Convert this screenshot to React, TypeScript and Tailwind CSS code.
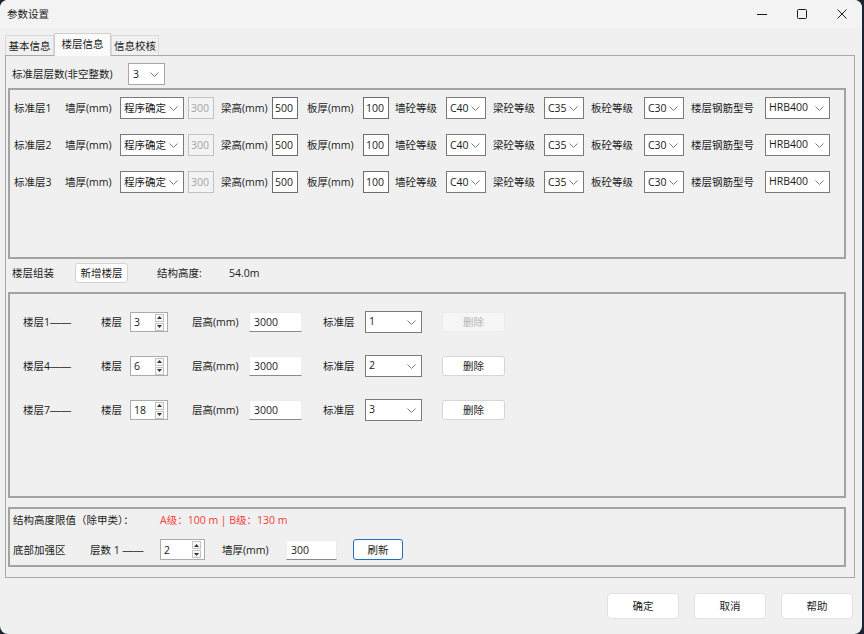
import React from "react";

function Chevron() {
  return (
    <svg width="9" height="5" viewBox="0 0 9 5" className="shrink-0">
      <path d="M0.5 0.5L4.5 4.5L8.5 0.5" stroke="#7a7a7a" strokeWidth="1" fill="none" />
    </svg>
  );
}

function Sel({ text, cls, top }: { text: string; cls: string; top?: boolean }) {
  return (
    <div
      className={`flex h-[22px] shrink-0 justify-between bg-white border border-[#7a7a7a] pl-[3px] pr-[5px] ${
        top ? "items-start pt-[1px]" : "items-center"
      } ${cls}`}
    >
      <span className="leading-[16px]">{text}</span>
      <span className={top ? "self-center" : ""}>
        <Chevron />
      </span>
    </div>
  );
}

function Input({ text }: { text: string }) {
  return (
    <div className="flex h-[22px] w-[26px] shrink-0 items-center border border-[#6e6e6e] bg-white pl-[2px]">
      {text}
    </div>
  );
}

function TextBox({ text, cls }: { text: string; cls: string }) {
  return (
    <div
      className={`flex shrink-0 items-center border border-[#ececec] border-b-[#8a8a8a] bg-white pl-[4px] ${cls}`}
    >
      {text}
    </div>
  );
}

function Tri({ up }: { up?: boolean }) {
  return (
    <div className="flex h-[8px] w-[9px] items-center justify-center border border-[#c4c4c4] bg-[#f7f7f7]">
      <svg width="5" height="3" viewBox="0 0 5 3">
        <path d={up ? "M0 3L2.5 0L5 3Z" : "M0 0L2.5 3L5 0Z"} fill="#333" />
      </svg>
    </div>
  );
}

function Spin({ text, cls }: { text: string; cls: string }) {
  return (
    <div className={`flex shrink-0 items-center border border-[#ababab] bg-white ${cls}`}>
      <span className="flex-1 pl-[3px]">{text}</span>
      <div className="mr-[3px] flex flex-col gap-[1px]">
        <Tri up />
        <Tri />
      </div>
    </div>
  );
}

function Dash() {
  return <span className="font-['Liberation_Sans',sans-serif]">——</span>;
}

function StdRow({ n }: { n: number }) {
  return (
    <div className="flex h-[22px] items-center">
      <span className="w-[51px] shrink-0">标准层{n}</span>
      <span className="w-[55px] shrink-0">墙厚(mm)</span>
      <Sel text="程序确定" cls="w-[64px]" />
      <div className="ml-[4px] flex h-[22px] w-[26px] shrink-0 items-center border border-[#c2c2c2] bg-[#f3f3f3] pl-[2px] text-[#a3a3a3]">
        300
      </div>
      <span className="ml-[7px] w-[51px] shrink-0">梁高(mm)</span>
      <Input text="500" />
      <span className="ml-[9px] w-[56px] shrink-0">板厚(mm)</span>
      <Input text="100" />
      <span className="ml-[6px] w-[51px] shrink-0">墙砼等级</span>
      <Sel text="C40" cls="w-[40px]" />
      <span className="ml-[7px] w-[51px] shrink-0">梁砼等级</span>
      <Sel text="C35" cls="w-[40px]" />
      <span className="ml-[7px] w-[53px] shrink-0">板砼等级</span>
      <Sel text="C30" cls="w-[40px]" />
      <span className="ml-[7px] w-[74px] shrink-0">楼层钢筋型号</span>
      <Sel text="HRB400" cls="w-[65px]" top />
    </div>
  );
}

function FloorRow({ a, b, std, disabled }: { a: number; b: string; std: string; disabled?: boolean }) {
  return (
    <div className="flex h-[22px] items-center">
      <span className="w-[78px] shrink-0">
        楼层{a}
        <Dash />
      </span>
      <span className="w-[29px] shrink-0">楼层</span>
      <Spin text={b} cls="h-[20px] w-[38px]" />
      <span className="ml-[24px] w-[57px] shrink-0">层高(mm)</span>
      <TextBox text="3000" cls="h-[20px] w-[53px]" />
      <span className="ml-[21px] w-[42px] shrink-0">标准层</span>
      <Sel text={std} cls="w-[57px]" top />
      {disabled ? (
        <div className="ml-[20px] flex h-[20px] w-[63px] shrink-0 items-center justify-center rounded-[3px] border border-[#ececec] bg-[#f6f6f6] text-[#b5b5b5]">
          删除
        </div>
      ) : (
        <div className="ml-[20px] flex h-[20px] w-[63px] shrink-0 items-center justify-center rounded-[3px] border border-[#d6d6d6] bg-white">
          删除
        </div>
      )}
    </div>
  );
}

export default function App() {
  return (
    <div className="h-[634px] w-[864px] overflow-hidden bg-[#1d2330] font-['Open_Sans','Noto_Sans_CJK_SC',sans-serif] text-[10.5px] leading-[14px] text-[#1b1b1b]">
      <div className="flex h-[634px] w-[862px] flex-col overflow-hidden rounded-[8px] bg-[#f0f0f0]">
        {/* title bar */}
        <div className="flex h-[28px] shrink-0 items-center justify-between bg-[#f3f3f3] pl-[7px]">
          <span>参数设置</span>
          <div className="flex h-[28px] items-center">
            <div className="flex w-[40px] items-center justify-center">
              <svg width="10" height="10" viewBox="0 0 10 10">
                <path d="M0 5.5H10" stroke="#1a1a1a" strokeWidth="1" />
              </svg>
            </div>
            <div className="flex w-[40px] items-center justify-center">
              <svg width="10" height="10" viewBox="0 0 10 10">
                <rect x="0.5" y="0.5" width="9" height="9" rx="1" stroke="#1a1a1a" strokeWidth="1" fill="none" />
              </svg>
            </div>
            <div className="flex w-[40px] items-center justify-center">
              <svg width="10" height="10" viewBox="0 0 10 10">
                <path d="M0.5 0.5L9.5 9.5M9.5 0.5L0.5 9.5" stroke="#1a1a1a" strokeWidth="1" />
              </svg>
            </div>
          </div>
        </div>

        {/* tabs */}
        <div className="relative z-10 flex h-[27px] shrink-0 items-end pl-[5px]">
          <div className="flex h-[20px] w-[49px] items-center justify-center border border-b-0 border-[#d9d9d9] bg-[#f0f0f0]">
            基本信息
          </div>
          <div className="mb-[-1px] flex h-[23px] w-[57px] items-center justify-center border border-b-0 border-[#cfcfcf] bg-[#fafafa] pb-[2px]">
            楼层信息
          </div>
          <div className="flex h-[20px] w-[48px] items-center justify-center border border-b-0 border-[#d9d9d9] bg-[#f0f0f0]">
            信息校核
          </div>
        </div>

        {/* tab panel */}
        <div className="ml-[5px] w-[850px] shrink-0 border border-[#a9a9a9] bg-[#f0f0f0] pb-[10px] pt-[7px]">
          <div className="flex h-[22px] items-center pl-[6px]">
            <span className="w-[116px] shrink-0">标准层层数(非空整数)</span>
            <div className="flex h-[22px] w-[37px] items-center justify-between border border-[#a8a8a8] bg-white pl-[4px] pr-[5px]">
              <span>3</span>
              <Chevron />
            </div>
          </div>

          <div className="ml-[2px] mt-[3px] flex h-[171px] w-[838px] flex-col gap-[15px] border-2 border-[#a3a3a3] pl-[4px] pt-[7px]">
            <StdRow n={1} />
            <StdRow n={2} />
            <StdRow n={3} />
          </div>

          <div className="mt-[4px] flex h-[20px] items-center pl-[6px]">
            <span className="w-[63px] shrink-0">楼层组装</span>
            <div className="flex h-[20px] w-[53px] shrink-0 items-center justify-center rounded-[3px] border border-[#d3d3d3] bg-white">
              新增楼层
            </div>
            <span className="ml-[29px] w-[72px] shrink-0">结构高度:</span>
            <span>54.0m</span>
          </div>

          <div className="ml-[2px] mt-[9px] flex h-[206px] w-[838px] flex-col gap-[22px] border-2 border-[#a3a3a3] pl-[13px] pt-[17px]">
            <FloorRow a={1} b="3" std="1" disabled />
            <FloorRow a={4} b="6" std="2" />
            <FloorRow a={7} b="18" std="3" />
          </div>

          <div className="ml-[2px] mt-[9px] h-[60px] w-[838px] border-2 border-[#a3a3a3] pl-[3px] pt-[4px]">
            <div className="flex h-[14px] items-center">
              <span className="w-[147px] shrink-0">结构高度限值（除甲类）：</span>
              <span className="text-[#f23c3c]">A级：100 m | B级：130 m</span>
            </div>
            <div className="mt-[12px] flex h-[21px] items-center">
              <span className="w-[77px] shrink-0">底部加强区</span>
              <span className="w-[70px] shrink-0">
                层数 1 <Dash />
              </span>
              <Spin text="2" cls="h-[21px] w-[45px]" />
              <span className="ml-[17px] w-[64px] shrink-0">墙厚(mm)</span>
              <TextBox text="300" cls="h-[20px] w-[51px]" />
              <div className="ml-[16px] flex h-[21px] w-[50px] shrink-0 items-center justify-center rounded-[3px] border border-[#1f6fc4] bg-white">
                刷新
              </div>
            </div>
          </div>
        </div>

        {/* bottom buttons */}
        <div className="mt-[15px] flex justify-end gap-[15px] pr-[9px]">
          <div className="flex h-[26px] w-[72px] items-center justify-center rounded-[4px] border border-[#e2e2e2] bg-white">
            确定
          </div>
          <div className="flex h-[26px] w-[72px] items-center justify-center rounded-[4px] border border-[#e2e2e2] bg-white">
            取消
          </div>
          <div className="flex h-[26px] w-[72px] items-center justify-center rounded-[4px] border border-[#e2e2e2] bg-white">
            帮助
          </div>
        </div>
      </div>
    </div>
  );
}
